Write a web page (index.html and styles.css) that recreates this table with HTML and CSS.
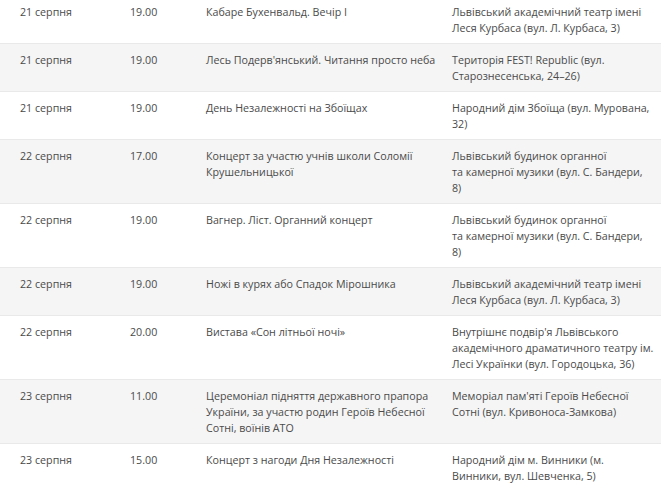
FILE: index.html
```html
<!DOCTYPE html>
<html lang="uk">
<head>
<meta charset="utf-8">
<link rel="stylesheet" href="styles.css">
</head>
<body>
<table class="events">
  <colgroup>
    <col class="c-date"><col class="c-time"><col class="c-title"><col class="c-place">
  </colgroup>
  <tbody>
    <tr>
      <td>21 серпня</td><td>19.00</td><td>Кабаре Бухенвальд. Вечір І</td>
      <td>Львівський академічний театр імені<br>Леся Курбаса (вул. Л. Курбаса, 3)</td>
    </tr>
    <tr>
      <td>21 серпня</td><td>19.00</td><td>Лесь Подерв'янський. Читання просто неба</td>
      <td>Територія FEST! Republic (вул.<br>Старознесенська, 24–26)</td>
    </tr>
    <tr>
      <td>21 серпня</td><td>19.00</td><td>День Незалежності на Збоїщах</td>
      <td>Народний дім Збоїща (вул. Мурована,<br>32)</td>
    </tr>
    <tr>
      <td>22 серпня</td><td>17.00</td><td>Концерт за участю учнів школи Соломії<br>Крушельницької</td>
      <td>Львівський будинок органної<br>та камерної музики (вул. С. Бандери,<br>8)</td>
    </tr>
    <tr>
      <td>22 серпня</td><td>19.00</td><td>Вагнер. Ліст. Органний концерт</td>
      <td>Львівський будинок органної<br>та камерної музики (вул. С. Бандери,<br>8)</td>
    </tr>
    <tr>
      <td>22 серпня</td><td>19.00</td><td>Ножі в курях або Спадок Мірошника</td>
      <td>Львівський академічний театр імені<br>Леся Курбаса (вул. Л. Курбаса, 3)</td>
    </tr>
    <tr>
      <td>22 серпня</td><td>20.00</td><td>Вистава «Сон літньої ночі»</td>
      <td>Внутрішнє подвір'я Львівського<br>академічного драматичного театру ім.<br>Лесі Українки (вул. Городоцька, 36)</td>
    </tr>
    <tr>
      <td>23 серпня</td><td>11.00</td><td>Церемоніал підняття державного прапора<br>України, за участю родин Героїв Небесної<br>Сотні, воїнів АТО</td>
      <td>Меморіал пам'яті Героїв Небесної<br>Сотні (вул. Кривоноса-Замкова)</td>
    </tr>
    <tr>
      <td>23 серпня</td><td>15.00</td><td>Концерт з нагоди Дня Незалежності</td>
      <td>Народний дім м. Винники (м.<br>Винники, вул. Шевченка, 5)</td>
    </tr>
  </tbody>
</table>
</body>
</html>
```

FILE: styles.css
```css
html, body {
  margin: 0;
  padding: 0;
  background: #ffffff;
}

body {
  font-family: "Open Sans", "Noto Sans", sans-serif;
  font-size: 10.7px;
  line-height: 16px;
  color: #4a4a4a;
  overflow: hidden;
}

.events {
  width: 661px;
  margin-top: -5px;
  border-collapse: collapse;
  table-layout: fixed;
}

.c-date { width: 110px; }
.c-time { width: 76px; }
.c-title { width: 246px; }
.c-place { width: 229px; }

.events td {
  padding: 8px 0 7px 20px;
  border-top: 1px solid #e9e9e9;
  vertical-align: top;
  white-space: nowrap;
}

.events tr:nth-child(even) td {
  background: #f5f5f5;
}
```
